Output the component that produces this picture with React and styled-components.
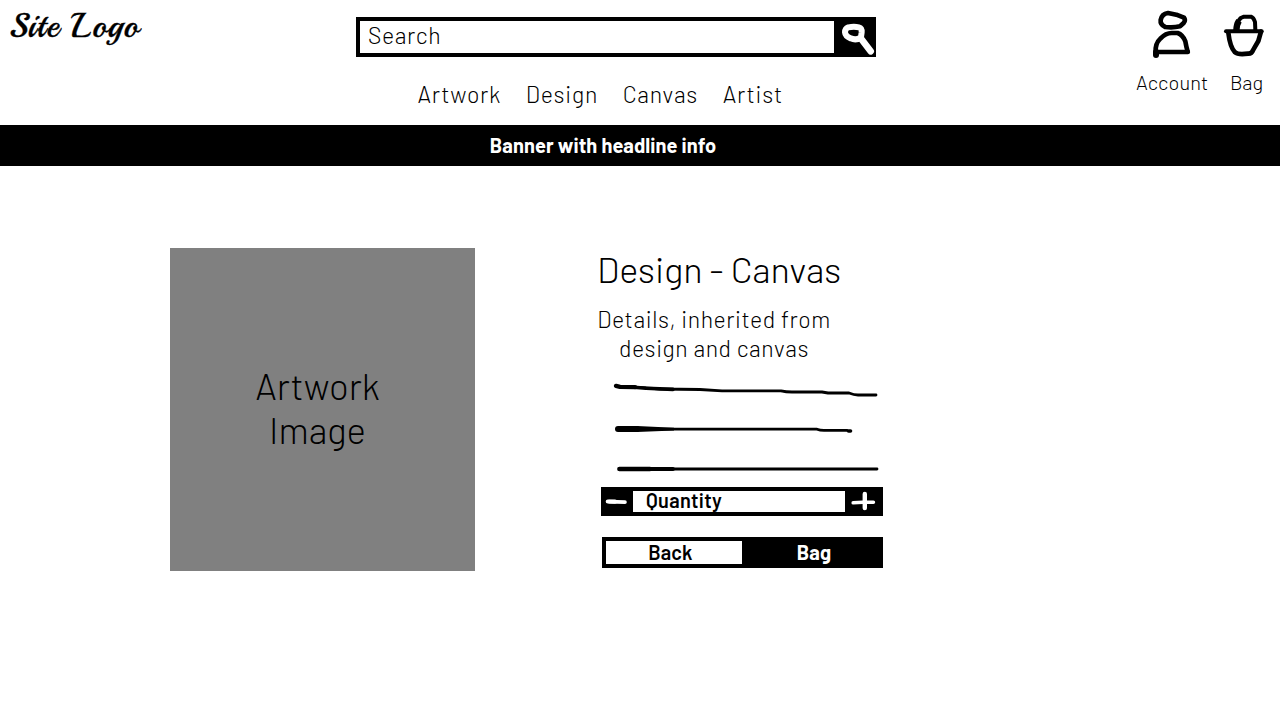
import React from "react";
import styled, { createGlobalStyle } from "styled-components";

const GlobalStyle = createGlobalStyle`
  * { box-sizing: border-box; }
  body {
    margin: 0;
    background: #fff;
    color: #000;
    font-family: Barlow, Roboto, sans-serif;
    font-weight: 300;
  }
`;

const Header = styled.header`
  display: flex;
  height: 125px;
`;

const Logo = styled.div`
  width: 356px;
  padding: 4px 0 0 9px;
  font-family: Playball, "Liberation Serif", cursive;
  font-weight: 400;
  font-size: 34px;
  line-height: 44px;
  letter-spacing: 1.3px;
  -webkit-text-stroke: 0.4px #000;
  white-space: nowrap;
`;

const Center = styled.div`
  width: 520px;
  padding-top: 17px;
`;

const SearchBar = styled.div`
  display: flex;
  height: 40px;
  background: #000;
`;

const SearchField = styled.div`
  flex: 1;
  margin: 4px 0 4px 4px;
  padding-left: 8px;
  background: #fff;
  font-size: 23px;
  line-height: 28px;
  letter-spacing: 0.6px;
`;

const Icon = styled.svg`
  display: block;
  flex: none;
  fill: none;
  stroke: ${(p) => p.$color || "#000"};
  stroke-linecap: round;
  stroke-linejoin: round;
`;

const Nav = styled.nav`
  display: flex;
  gap: 24.6px;
  margin-top: 23px;
  padding-left: 61.4px;
  font-size: 23px;
  line-height: 28px;
  letter-spacing: 0.78px;
`;

const Actions = styled.div`
  display: flex;
  gap: 13px;
  margin-left: auto;
  padding: 8px 14px 0 0;
`;

const Action = styled.div`
  display: flex;
  flex-direction: column;
  align-items: center;
  gap: 10px;
  width: ${(p) => p.$width}px;
  font-size: 20px;
  line-height: 24px;
`;

const ActionLabel = styled.span`
  padding: 0 ${(p) => p.$right || 0}px 0 ${(p) => p.$left || 0}px;
  letter-spacing: ${(p) => p.$spacing || 0}px;
`;

const Banner = styled.div`
  height: 41px;
  padding-right: 74px;
  background: #000;
  color: #fff;
  font-weight: 700;
  font-size: 20px;
  line-height: 40px;
  letter-spacing: 0.08px;
  text-align: center;
`;

const Main = styled.main`
  display: flex;
  gap: 122px;
  padding: 82px 0 0 170px;
`;

const Artwork = styled.div`
  display: flex;
  align-items: center;
  justify-content: center;
  width: 305px;
  height: 323px;
  padding: 0 10px 5px 0;
  background: #808080;
  font-size: 36.6px;
  line-height: 44px;
  text-align: center;
`;

const Details = styled.section`
  display: flex;
  flex-direction: column;
  width: 290px;
`;

const Title = styled.h1`
  margin: 0;
  font-weight: 300;
  font-size: 36px;
  line-height: 42px;
  letter-spacing: -0.05px;
  white-space: nowrap;
`;

const Description = styled.p`
  width: 234px;
  margin: 15px 0 0;
  font-size: 23px;
  line-height: 29px;
  letter-spacing: 0.58px;
  text-align: center;
  white-space: nowrap;
`;

const Stepper = styled.div`
  display: flex;
  width: 282px;
  height: 29px;
  margin-left: 4px;
  background: #000;
`;

const Quantity = styled.div`
  flex: 1;
  margin: 4px 0;
  padding-left: 13px;
  background: #fff;
  font-weight: 600;
  font-size: 20px;
  line-height: 18px;
  letter-spacing: 0.3px;
`;

const Buttons = styled.div`
  display: flex;
  width: 281px;
  height: 31px;
  margin: 21px 0 0 5px;
  padding: 4px;
  background: #000;
`;

const Button = styled.button`
  width: ${(p) => p.$width}px;
  padding: 0 ${(p) => (p.$primary ? 0 : 7)}px 0 ${(p) => (p.$primary ? 7 : 0)}px;
  border: 0;
  background: ${(p) => (p.$primary ? "#000" : "#fff")};
  color: ${(p) => (p.$primary ? "#fff" : "#000")};
  display: flex;
  justify-content: center;
  font: ${(p) => (p.$primary ? 700 : 600)} 20px/22px Barlow, Roboto, sans-serif;
  letter-spacing: 0.1px;
`;

const SearchIcon = () => (
  <Icon $color="#fff" width="42" height="40" viewBox="72 21 126 120">
    <path strokeWidth="18" d="M115 52Q132 49 147 52Q156 54 155 67L153 81Q140 93 122 85Q106 79 105 67Q105 56 115 52Z" />
    <path strokeWidth="20" d="M154 87L182 124" />
  </Icon>
);

const AccountIcon = () => (
  <Icon width="44" height="52" viewBox="32 24 132 156">
    <path strokeWidth="14" d="M83 39L108 44L131 53Q137 61 130 69L119 79Q98 84 75 81Q59 74 61 60Q64 42 83 39Z" />
    <path strokeWidth="14" d="M46 157Q44 131 60 116Q76 99 94 99H112Q127 104 135 124Q138 141 142 155" />
    <path strokeWidth="13" d="M50 156H143" />
    <path strokeWidth="18" d="M47 156V165" />
  </Icon>
);

const BagIcon = () => (
  <Icon width="44" height="52" viewBox="246 24 132 156">
    <path strokeWidth="12" d="M258 94H365" />
    <path strokeWidth="14" d="M265 98Q270 141 285 157Q294 165 324 161Q335 162 340 149L355 123L363 95" />
    <path strokeWidth="12" d="M290 92Q290 66 302 54L312 50H333Q341 53 345 66L346 90" />
    <path strokeWidth="19" strokeLinecap="butt" d="M289 92Q289 74 297 62" />
  </Icon>
);

const MinusIcon = () => (
  <Icon $color="#fff" width="32" height="29" viewBox="0 0 32 29">
    <path strokeWidth="4.2" d="M6.8 14.5L14 14.6" />
    <path strokeWidth="3.6" d="M8 14.6L24 15.1" />
  </Icon>
);

const PlusIcon = () => (
  <Icon $color="#fff" width="38" height="29" viewBox="0 0 38 29">
    <path strokeWidth="3.6" d="M8.2 15.8L18 15.3L28.4 15.2" />
    <path strokeWidth="4.4" d="M19.8 7V21" />
  </Icon>
);

const DetailLines = () => (
  <Icon width="290" height="124" viewBox="597 363 290 124">
    <path strokeWidth="2.8" d="M617 386.3L643 387.6L660 389L700 389.5L722 390.8H781Q786 392 792 392H822L828 393H849Q854 395 858 395H876" />
    <path strokeWidth="4.4" d="M616 385.9L620 386.9L635 387.1" />
    <path strokeWidth="3.6" d="M634 387.2L646 388.3L673 389.4" />
    <path strokeWidth="2.8" d="M618 429.2H817Q820 430.4 824 430.4H847" />
    <path strokeWidth="6" d="M618 429H637" />
    <path fill="#000" strokeWidth="0" d="M637 426L674 427.8V430.6L637 432Z" />
    <path strokeWidth="3.6" d="M848.5 431H850.5" />
    <path strokeWidth="2.8" d="M620 469H877" />
    <path strokeWidth="4.6" d="M619.4 469H650" />
    <path strokeWidth="3.8" d="M648 469H673" />
  </Icon>
);

export default function App() {
  return (
    <>
      <GlobalStyle />
      <Header>
        <Logo>Site Logo</Logo>
        <Center>
          <SearchBar>
            <SearchField>Search</SearchField>
            <SearchIcon />
          </SearchBar>
          <Nav>
            <span>Artwork</span>
            <span>Design</span>
            <span>Canvas</span>
            <span>Artist</span>
          </Nav>
        </Center>
        <Actions>
          <Action $width={73}>
            <AccountIcon />
            <ActionLabel $right={0.6} $spacing={0.1}>Account</ActionLabel>
          </Action>
          <Action $width={44}>
            <BagIcon />
            <ActionLabel $left={5}>Bag</ActionLabel>
          </Action>
        </Actions>
      </Header>
      <Banner>Banner with headline info</Banner>
      <Main>
        <Artwork>
          Artwork
          <br />
          Image
        </Artwork>
        <Details>
          <Title>Design - Canvas</Title>
          <Description>
            Details, inherited from
            <br />
            design and canvas
          </Description>
          <DetailLines />
          <Stepper>
            <MinusIcon />
            <Quantity>Quantity</Quantity>
            <PlusIcon />
          </Stepper>
          <Buttons>
            <Button $width={136}>Back</Button>
            <Button $width={137} $primary>Bag</Button>
          </Buttons>
        </Details>
      </Main>
    </>
  );
}
